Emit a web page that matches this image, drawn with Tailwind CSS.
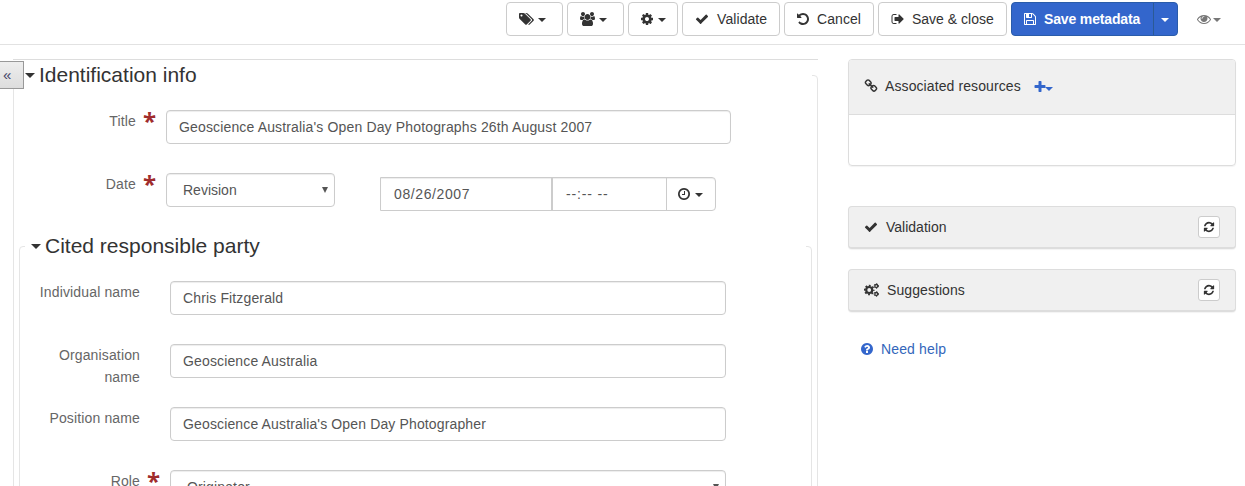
<!DOCTYPE html>
<html lang="en">
<head>
<meta charset="utf-8">
<title>Metadata editor</title>
<script src="https://cdn.jsdelivr.net/npm/@tailwindcss/browser@4"></script>
</head>
<body class="relative h-[486px] overflow-hidden bg-white font-['Liberation_Sans',Arial,sans-serif] text-[14px] leading-[22px] tracking-[0.14px] text-[#333]">
<svg class="hidden">
  <symbol id="check" viewBox="0 0 1792 1792"><path d="M1671 566q0 40-28 68l-724 724-136 136q-28 28-68 28t-68-28l-136-136-362-362q-28-28-28-68t28-68l136-136q28-28 68-28t68 28l294 295 656-657q28-28 68-28t68 28l136 136q28 28 28 68z"/></symbol>
  <symbol id="cog" viewBox="0 0 1792 1792"><path d="M1152 896q0-106-75-181t-181-75-181 75-75 181 75 181 181 75 181-75 75-181zm512-109v222q0 12-8 23t-20 13l-185 28q-19 54-39 91 35 50 107 138 10 12 10 25t-9 23q-27 37-99 108t-94 71q-12 0-26-9l-138-108q-44 23-91 38-16 136-29 186-7 28-36 28h-222q-14 0-24.5-8.5t-11.5-21.5l-28-184q-49-16-90-37l-141 107q-10 9-25 9-14 0-25-11-126-114-165-168-7-10-7-23 0-12 8-23 15-21 51-66.5t54-70.5q-27-50-41-99l-183-27q-13-2-21-12.5t-8-23.5v-222q0-12 8-23t19-13l186-28q14-46 39-92-40-57-107-138-10-12-10-24 0-10 9-23 26-36 98.5-107.5t94.5-71.5q13 0 26 10l138 107q44-23 91-38 16-136 29-186 7-28 36-28h222q14 0 24.5 8.5t11.5 21.5l28 184q49 16 90 37l142-107q9-9 24-9 13 0 25 10 129 119 165 170 7 8 7 22 0 12-8 23-15 21-51 66.5t-54 70.5q26 50 41 98l183 28q13 2 21 12.5t8 23.5z"/></symbol>
  <symbol id="undo" viewBox="0 0 1792 1792"><path d="M1664 896q0 156-61 298t-164 245-245 164-298 61q-172 0-327-72.5t-264-204.5q-7-10-6.5-22.5t8.5-20.5l137-138q10-9 25-9 16 2 23 12 73 95 179 147t225 52q104 0 198.5-40.5t163.5-109.5 109.5-163.5 40.5-198.5-40.5-198.5-109.5-163.5-163.5-109.5-198.5-40.5q-98 0-188 35.5t-160 101.5l137 138q31 30 14 69-17 40-59 40h-448q-26 0-45-19t-19-45v-448q0-42 40-59 39-17 69 14l130 129q107-101 244.5-156.5t284.5-55.5q156 0 298 61t245 164 164 245 61 298z"/></symbol>
  <symbol id="eye" viewBox="0 0 1792 1792"><path d="M1664 960q-152-236-381-353 61 104 61 225 0 185-131.5 316.5t-316.5 131.5-316.5-131.5-131.5-316.5q0-121 61-225-229 117-381 353 133 205 333.5 326.5t434.5 121.5 434.5-121.5 333.5-326.5zm-720-384q0-20-14-34t-34-14q-125 0-214.5 89.5t-89.5 214.5q0 20 14 34t34 14 34-14 14-34q0-86 61-147t147-61q20 0 34-14t14-34zm848 384q0 34-20 69-140 230-376.5 368.5t-499.5 138.5-499.5-139-376.5-368q-20-35-20-69t20-69q140-229 376.5-368t499.5-139 499.5 139 376.5 368q20 35 20 69z"/></symbol>
  <symbol id="clock" viewBox="0 0 1792 1792"><path d="M1024 544v448q0 14-9 23t-23 9h-320q-14 0-23-9t-9-23v-64q0-14 9-23t23-9h224v-352q0-14 9-23t23-9h64q14 0 23 9t9 23zm416 352q0-148-73-273t-198-198-273-73-273 73-198 198-73 273 73 273 198 198 273 73 273-73 198-198 73-273zm224 0q0 209-103 385.5t-279.5 279.5-385.5 103-385.5-103-279.5-279.5-103-385.5 103-385.5 279.5-279.5 385.5-103 385.5 103 279.5 279.5 103 385.5z"/></symbol>
  <symbol id="refresh" viewBox="0 0 1792 1792"><path d="M1639 1056q0 5-1 7-64 268-268 434.5t-478 166.5q-146 0-282.5-55t-243.5-157l-129 129q-19 19-45 19t-45-19-19-45v-448q0-26 19-45t45-19h448q26 0 45 19t19 45-19 45l-137 137q71 66 161 102t187 36q134 0 250-65t186-179q11-17 53-117 8-23 30-23h192q13 0 22.5 9.5t9.5 22.5zm25-800v448q0 26-19 45t-45 19h-448q-26 0-45-19t-19-45 19-45l138-138q-148-137-349-137-134 0-250 65t-186 179q-11 17-53 117-8 23-30 23h-199q-13 0-22.5-9.5t-9.5-22.5v-7q65-268 270-434.5t480-166.5q146 0 284 55.5t245 156.5l130-129q19-19 45-19t45 19 19 45z"/></symbol>
  <symbol id="plus" viewBox="0 0 1792 1792"><path d="M1600 736v192q0 40-28 68t-68 28h-416v416q0 40-28 68t-68 28h-192q-40 0-68-28t-28-68v-416h-416q-40 0-68-28t-28-68v-192q0-40 28-68t68-28h416v-416q0-40 28-68t68-28h192q40 0 68 28t28 68v416h416q40 0 68 28t28 68z"/></symbol>
  <symbol id="question" viewBox="0 0 1792 1792"><path d="M1024 1376v-192q0-14-9-23t-23-9h-192q-14 0-23 9t-9 23v192q0 14 9 23t23 9h192q14 0 23-9t9-23zm256-672q0-88-55.5-163t-138.5-116-170-41q-243 0-371 213-15 24 8 42l132 100q7 6 19 6 16 0 25-12 53-68 86-92 34-24 86-24 48 0 85.5 26t37.5 59q0 38-20 61t-68 45q-63 28-115.5 86.5t-52.5 125.5v36q0 14 9 23t23 9h192q14 0 23-9t9-23q0-19 21.5-49.5t54.5-49.5q32-18 49-28.5t46-35 44.5-48 28-60.5 12.5-81zm384 192q0 209-103 385.5t-279.5 279.5-385.5 103-385.5-103-279.5-279.5-103-385.5 103-385.5 279.5-279.5 385.5-103 385.5 103 279.5 279.5 103 385.5z"/></symbol>
  <symbol id="floppy" viewBox="0 0 1792 1792"><path d="M512 1536h768v-384h-768v384zm896 0h128v-896q0-14-10-38.5t-20-34.5l-281-281q-10-10-34-20t-39-10v416q0 40-28 68t-68 28h-576q-40 0-68-28t-28-68v-416h-128v1280h128v-416q0-40 28-68t68-28h832q40 0 68 28t28 68v416zm-384-928v-320q0-13-9.5-22.5t-22.5-9.5h-192q-13 0-22.5 9.5t-9.5 22.5v320q0 13 9.5 22.5t22.5 9.5h192q13 0 22.5-9.5t9.5-22.5zm640 32v928q0 40-28 68t-68 28h-1344q-40 0-68-28t-28-68v-1344q0-40 28-68t68-28h928q40 0 88 20t76 48l280 280q28 28 48 76t20 88z"/></symbol>
  <symbol id="signout" viewBox="0 0 1792 1792"><path d="M704 1440q0 4 1 20t.5 26.5-3 23.5-10 19.5-20.5 6.5h-320q-119 0-203.5-84.5t-84.5-203.5v-704q0-119 84.5-203.5t203.5-84.5h320q13 0 22.5 9.5t9.5 22.5q0 4 1 20t.5 26.5-3 23.5-10 19.5-20.5 6.5h-320q-66 0-113 47t-47 113v704q0 66 47 113t113 47h312l11.5 1 11.5 3 8 5.5 7 9 2 13.5zm928-544q0 26-19 45l-544 544q-19 19-45 19t-45-19-19-45v-288h-448q-26 0-45-19t-19-45v-384q0-26 19-45t45-19h448v-288q0-26 19-45t45-19 45 19l544 544q19 19 19 45z"/></symbol>
  <symbol id="tags" viewBox="128 0 1920 1792"><path d="M576 448q0-53-37.5-90.5t-90.5-37.5-90.5 37.5-37.5 90.5 37.5 90.5 90.5 37.5 90.5-37.5 37.5-90.5zm1067 576q0 53-37 90l-491 492q-39 37-91 37-53 0-90-37l-715-716q-38-37-64.5-101t-26.5-117v-416q0-52 38-90t90-38h416q53 0 117 26.5t102 64.5l715 714q37 39 37 91zm384 0q0 53-37 90l-491 492q-39 37-91 37-36 0-59-14t-53-45l470-470q37-37 37-90 0-52-37-91l-715-714q-38-38-102-64.5t-117-26.5h224q53 0 117 26.5t102 64.5l715 714q37 39 37 91z"/></symbol>
  <symbol id="users" viewBox="0 0 1920 1792"><path d="M593 896q-162 5-265 128h-134q-82 0-138-40.5t-56-118.5q0-353 124-353 6 0 43.5 21t97.5 42.5 119 21.5q67 0 133-23-5 37-5 66 0 139 81 256zm1071 637q0 120-73 189.5t-194 69.5h-874q-121 0-194-69.5t-73-189.5q0-53 3.5-103.5t14-109 26.5-108.5 43-97.5 62-81 85.5-53.5 111.5-20q10 0 43 21.5t73 48 107 48 135 21.5 135-21.5 107-48 73-48 43-21.5q61 0 111.5 20t85.5 53.5 62 81 43 97.5 26.5 108.5 14 109 3.5 103.5zm-1024-1277q0 106-75 181t-181 75-181-75-75-181 75-181 181-75 181 75 75 181zm704 384q0 159-112.5 271.5t-271.5 112.5-271.5-112.5-112.5-271.5 112.5-271.5 271.5-112.5 271.5 112.5 112.5 271.5zm576 225q0 78-56 118.5t-138 40.5h-134q-103-123-265-128 81-117 81-256 0-29-5-66 66 23 133 23 59 0 119-21.5t97.5-42.5 43.5-21q124 0 124 353zm-128-609q0 106-75 181t-181 75-181-75-75-181 75-181 181-75 181 75 75 181z"/></symbol>
  <symbol id="link" viewBox="0 0 1792 1792"><path d="M1520 1216q0-40-28-68l-208-208q-28-28-68-28-42 0-72 32 3 3 19 18.5t21.5 21.5 15 19 13 25.5 3.5 27.5q0 40-28 68t-68 28q-15 0-27.5-3.5t-25.5-13-19-15-21.5-21.5-18.5-19q-33 31-33 73 0 40 28 68l206 207q27 27 68 27 40 0 68-26l147-146q28-28 28-67zm-703-705q0-40-28-68l-206-207q-28-28-68-28-39 0-68 27l-147 146q-28 28-28 67 0 40 28 68l208 208q27 27 68 27 42 0 72-31-3-3-19-18.5t-21.5-21.5-15-19-13-25.5-3.5-27.5q0-40 28-68t68-28q15 0 27.5 3.5t25.5 13 19 15 21.5 21.5 18.5 19q33-31 33-73zm895 705q0 120-85 203l-147 146q-83 83-203 83-121 0-204-85l-206-207q-83-83-83-203 0-123 88-209l-88-88q-86 88-208 88-120 0-204-84l-208-208q-84-84-84-204t85-203l147-146q83-83 203-83 121 0 204 85l206 207q83 83 83 203 0 123-88 209l88 88q86-88 208-88 120 0 204 84l208 208q84 84 84 204z"/></symbol>
  <symbol id="cogs" viewBox="0 0 15 14"><g fill="none" stroke="currentColor"><circle cx="5.2" cy="7" r="3" stroke-width="2.2"/><circle cx="5.2" cy="7" r="4.5" stroke-width="1.7" stroke-dasharray="1.9 1.634" stroke-dashoffset=".95"/><circle cx="12.3" cy="3" r="1.5" stroke-width="1.3"/><circle cx="12.3" cy="3" r="2.3" stroke-width="1" stroke-dasharray="1.2 1.209"/><circle cx="12.3" cy="11" r="1.5" stroke-width="1.3"/><circle cx="12.3" cy="11" r="2.3" stroke-width="1" stroke-dasharray="1.2 1.209"/></g></symbol>
  <symbol id="caret" viewBox="0 0 8 4"><path d="M0 0h8L4 4z"/></symbol>
</svg>

<header class="flex h-[45px] gap-1 border-b border-[#e2e2e2] fill-[#333] pt-[2px] pl-[506px]">
  <button class="flex h-[34px] w-[57px] items-center rounded-[4px] border border-[#ccc] pl-3"><svg class="h-[14px] w-[15px]"><use href="#tags"/></svg><svg class="mt-px ml-1 h-1 w-2"><use href="#caret"/></svg></button>
  <button class="flex h-[34px] w-[57px] items-center rounded-[4px] border border-[#ccc] pl-3"><svg class="h-[14px] w-[15px]"><use href="#users"/></svg><svg class="mt-px ml-1 h-1 w-2"><use href="#caret"/></svg></button>
  <button class="flex h-[34px] w-[50px] items-center rounded-[4px] border border-[#ccc] pl-[11px]"><svg class="size-[14px]"><use href="#cog"/></svg><svg class="mt-px ml-1 h-1 w-2"><use href="#caret"/></svg></button>
  <button class="flex h-[34px] w-[98px] items-center rounded-[4px] border border-[#ccc] pl-3"><svg class="size-[14px]"><use href="#check"/></svg><span class="ml-2 tracking-[0.08px]">Validate</span></button>
  <button class="flex h-[34px] w-[90px] items-center rounded-[4px] border border-[#ccc] pl-[11px]"><svg class="size-[14px]"><use href="#undo"/></svg><span class="ml-[7px] tracking-[0.08px]">Cancel</span></button>
  <button class="flex h-[34px] w-[129px] items-center rounded-[4px] border border-[#ccc] pl-3"><svg class="size-[14px]"><use href="#signout"/></svg><span class="ml-[7px] tracking-[0px]">Save &amp; close</span></button>
  <div class="flex h-[34px] w-[167px] rounded-[4px] border border-[#2a5caa] bg-[#3366cc] text-white">
    <button class="flex w-[142px] items-center border-r border-[#2b5a95] pl-[11px]"><svg class="size-[14px] fill-white"><use href="#floppy"/></svg><span class="ml-[7px] font-bold tracking-[-0.15px]">Save metadata</span></button>
    <button class="flex flex-1 items-center justify-center pr-[2px]"><svg class="mt-px h-1 w-2 fill-white"><use href="#caret"/></svg></button>
  </div>
  <button class="ml-[15px] flex h-[34px] items-center"><svg class="size-[14px] fill-[#777]"><use href="#eye"/></svg><svg class="mt-px ml-[2px] h-1 w-2 fill-[#777]"><use href="#caret"/></svg></button>
</header>

<div class="flex items-start fill-[#333] pt-[14px] pl-[13px]">
  <main class="w-[805px] border-t border-[#ddd]">
    <fieldset class="h-[440px] rounded-[4px] border border-[#e5e5e5] px-[5px]">
      <legend class="flex h-[30px] w-full items-center pl-[6px] text-[21px] tracking-[0px]"><svg class="mr-[4px] h-[5px] w-[10px]"><use href="#caret"/></svg>Identification info</legend>
      <div class="mt-[20px] flex h-[63px]">
        <label class="w-[117px] text-right text-[#666]">Title</label>
        <span class="ml-[7px] w-[23px] font-['Open_Sans'] text-[24px] leading-[21px] font-bold text-[#a02c2c]">*</span>
        <div class="flex h-[34px] w-[565px] items-center rounded-[4px] border border-[#ccc] px-3 tracking-[0.15px] text-[#555] shadow-[inset_0_1px_1px_rgba(0,0,0,0.075)]">Geoscience Australia's Open Day Photographs 26th August 2007</div>
      </div>
      <div class="flex h-[58px]">
        <label class="w-[117px] text-right text-[#666]">Date</label>
        <span class="ml-[7px] w-[23px] font-['Open_Sans'] text-[24px] leading-[21px] font-bold text-[#a02c2c]">*</span>
        <div class="flex h-[34px] w-[169px] items-center justify-between rounded-[4px] border border-[#ccc] pr-[6px] pl-4 text-[#555] shadow-[inset_0_1px_1px_rgba(0,0,0,0.075)]"><span class="tracking-[0px]">Revision</span><svg class="h-[6px] w-[6px] fill-[#555]" viewBox="0 0 6 6"><path d="M0 0h6L3 6z"/></svg></div>
        <div class="mt-1 ml-[45px] flex h-[34px] w-[336px] rounded-r-[4px] border border-[#ccc] text-[#555] shadow-[inset_0_1px_1px_rgba(0,0,0,0.075)]">
          <div class="flex w-[172px] items-center border-r-2 border-[#ccc] pl-[13px] tracking-[0.6px]">08/26/2007</div>
          <div class="flex w-[114px] items-center border-r border-[#ccc] pl-[13px] tracking-[0.85px]">--:-- --</div>
          <div class="flex items-center pl-[10px]"><svg class="size-[14px]"><use href="#clock"/></svg><svg class="mt-px ml-1 h-1 w-2"><use href="#caret"/></svg></div>
        </div>
      </div>
      <fieldset class="h-[280px] rounded-[4px] border border-[#e5e5e5] px-[5px]">
        <legend class="flex h-[30px] w-full items-center pl-[6px] text-[21px] tracking-[0px]"><svg class="mr-[4px] h-[5px] w-[10px]"><use href="#caret"/></svg>Cited responsible party</legend>
        <div class="mt-[20px] flex h-[63px]">
          <label class="w-[115px] text-right text-[#666]">Individual name</label>
          <div class="ml-[30px] flex h-[34px] w-[556px] items-center rounded-[4px] border border-[#ccc] px-3 text-[#555] shadow-[inset_0_1px_1px_rgba(0,0,0,0.075)]">Chris Fitzgerald</div>
        </div>
        <div class="flex h-[63px]">
          <label class="w-[115px] text-right text-[#666]">Organisation<br>name</label>
          <div class="ml-[30px] flex h-[34px] w-[556px] items-center rounded-[4px] border border-[#ccc] px-3 text-[#555] shadow-[inset_0_1px_1px_rgba(0,0,0,0.075)]">Geoscience Australia</div>
        </div>
        <div class="flex h-[63px]">
          <label class="w-[115px] text-right text-[#666]">Position name</label>
          <div class="ml-[30px] flex h-[34px] w-[556px] items-center rounded-[4px] border border-[#ccc] px-3 text-[#555] shadow-[inset_0_1px_1px_rgba(0,0,0,0.075)]">Geoscience Australia's Open Day Photographer</div>
        </div>
        <div class="flex h-[63px]">
          <label class="w-[115px] text-right text-[#666]">Role</label>
          <span class="ml-[7px] w-[23px] font-['Open_Sans'] text-[24px] leading-[21px] font-bold text-[#a02c2c]">*</span>
          <div class="flex h-[34px] w-[556px] items-center justify-between rounded-[4px] border border-[#ccc] pr-[6px] pl-4 text-[#555] shadow-[inset_0_1px_1px_rgba(0,0,0,0.075)]">Originator<svg class="h-[6px] w-[6px] fill-[#555]" viewBox="0 0 6 6"><path d="M0 0h6L3 6z"/></svg></div>
        </div>
      </fieldset>
    </fieldset>
  </main>

  <aside class="ml-[30px] w-[388px]">
    <section class="h-[107px] rounded-[4px] border border-[#ddd] shadow-[0_1px_1px_rgba(0,0,0,0.05)]">
      <div class="flex h-[55px] items-center rounded-t-[3px] border-b border-[#ddd] bg-[#f0f0f0] pb-[2px] pl-[15px]"><svg class="size-[14px]"><use href="#link"/></svg><span class="ml-[7px] tracking-[0.1px]">Associated resources</span><svg class="mt-px ml-[12px] size-[14px] fill-[#3366cc]"><use href="#plus"/></svg><svg class="-ml-[2px] mt-[5px] h-1 w-2 fill-[#3366cc]"><use href="#caret"/></svg></div>
    </section>
    <section class="mt-[40px] flex h-[43px] items-center rounded-[4px] border border-b-2 border-[#ddd] bg-[#f0f0f0] px-[15px] shadow-[0_1px_1px_rgba(0,0,0,0.05)]"><svg class="size-[14px]"><use href="#check"/></svg><span class="ml-2 tracking-[0px]">Validation</span>
      <button class="ml-auto flex size-[22px] items-center justify-center rounded-[3px] border border-[#ccc] bg-white"><svg class="size-3"><use href="#refresh"/></svg></button></section>
    <section class="mt-[20px] flex h-[43px] items-center rounded-[4px] border border-b-2 border-[#ddd] bg-[#f0f0f0] px-[15px] shadow-[0_1px_1px_rgba(0,0,0,0.05)]"><svg class="h-[14px] w-[15px]"><use href="#cogs"/></svg><span class="ml-2 tracking-[0.08px]">Suggestions</span>
      <button class="ml-auto flex size-[22px] items-center justify-center rounded-[3px] border border-[#ccc] bg-white"><svg class="size-3"><use href="#refresh"/></svg></button></section>
    <a class="mt-[26px] flex items-center pl-3 text-[#3366bb]"><svg class="size-[14px] fill-[#3366cc]"><use href="#question"/></svg><span class="ml-[7px]">Need help</span></a>
  </aside>
</div>

<button class="absolute top-[61px] left-0 flex h-[28px] w-[24px] items-center border border-l-0 border-[#999] bg-linear-to-b from-[#eee] to-[#ddd] pl-[3px] text-[15px] text-[#444466]">«</button>
</body>
</html>
